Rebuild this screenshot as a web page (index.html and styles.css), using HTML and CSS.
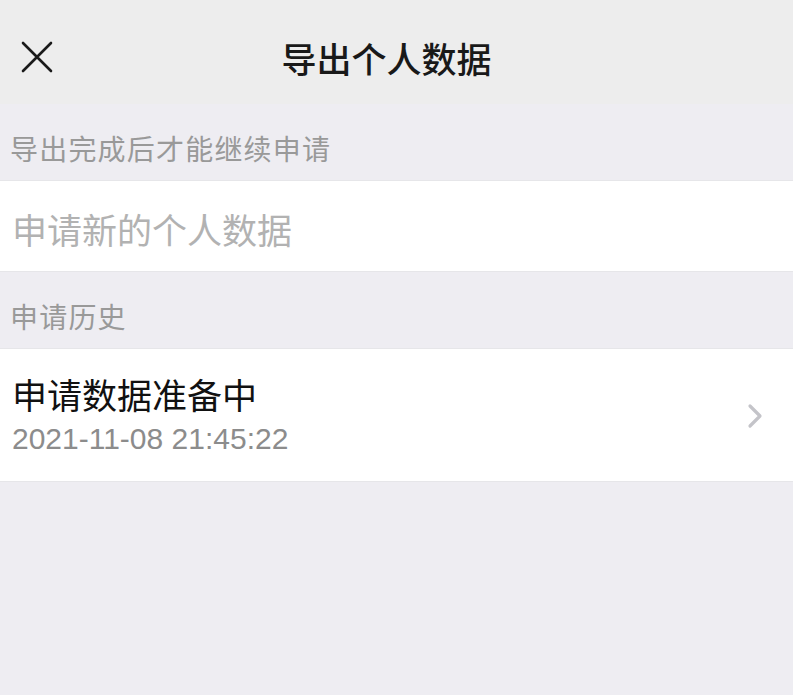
FILE: index.html
```html
<!DOCTYPE html>
<html lang="zh-CN">
<head>
    <meta charset="UTF-8">
    <meta name="viewport" content="width=device-width, initial-scale=1.0">
    <title>导出个人数据</title>
    <link rel="stylesheet" href="styles.css">
</head>
<body>
    <div class="navbar">
        <div class="nav-close">
            <svg width="32" height="32" viewBox="0 0 32 32">
                <path d="M2 2 L30 30 M30 2 L2 30" stroke="#1a1a1a" stroke-width="2.6" stroke-linecap="round" fill="none"/>
            </svg>
        </div>
        <h1 class="nav-title">导出个人数据</h1>
        <div class="nav-side"></div>
    </div>

    <div class="section-label first">导出完成后才能继续申请</div>
    <div class="cell cell-plain">
        <span class="cell-placeholder">申请新的个人数据</span>
    </div>

    <div class="section-label">申请历史</div>
    <div class="cell cell-history">
        <div class="history-text">
            <div class="history-title">申请数据准备中</div>
            <div class="history-time">2021-11-08 21:45:22</div>
        </div>
        <svg class="chevron" width="16" height="26" viewBox="0 0 16 26">
            <path d="M3 3 L13 13 L3 23" stroke="#c4c4c9" stroke-width="3.2" stroke-linecap="round" stroke-linejoin="round" fill="none"/>
        </svg>
    </div>
</body>
</html>
```

FILE: styles.css
```css
body {
    margin: 0;
    background-color: #eeedf2;
    font-family: "Noto Sans CJK SC", "Liberation Sans", sans-serif;
    height: 695px;
    overflow: hidden;
}
.navbar {
    display: grid;
    grid-template-columns: 180px 1fr 200px;
    align-items: center;
    height: 104px;
    background-color: #ededed;
}
.nav-close {
    display: flex;
    align-items: center;
    padding-left: 21px;
    padding-top: 10px;
}
.nav-title {
    margin: 0;
    padding-top: 10px;
    text-align: center;
    font-size: 35px;
    font-weight: 500;
    color: #191919;
    letter-spacing: 0;
}
.section-label {
    padding: 0 0 0 10px;
    height: 76px;
    line-height: 88px;
    font-size: 28px;
    letter-spacing: 1.2px;
    color: #999;
    box-sizing: border-box;
}
.section-label + .cell {
    border-top: 1px solid #e6e6e9;
}
.cell {
    background-color: #fff;
    border-bottom: 1px solid #e6e6e9;
}
.cell-plain {
    height: 90px;
    display: flex;
    align-items: center;
    padding-left: 12px;
}
.cell-placeholder {
    font-size: 35px;
    color: #b2b2b2;
    margin-top: 4px;
}
.cell-history {
    height: 132px;
    display: flex;
    align-items: center;
    justify-content: space-between;
    padding: 0 30px 0 12px;
}
.history-title {
    font-size: 35px;
    color: #111;
    line-height: 44px;
}
.history-time {
    font-family: "Liberation Sans", sans-serif;
    font-size: 30px;
    color: #8c8c8c;
    line-height: 38px;
    margin-top: 4px;
}
.chevron {
    margin-top: 2px;
}
```
